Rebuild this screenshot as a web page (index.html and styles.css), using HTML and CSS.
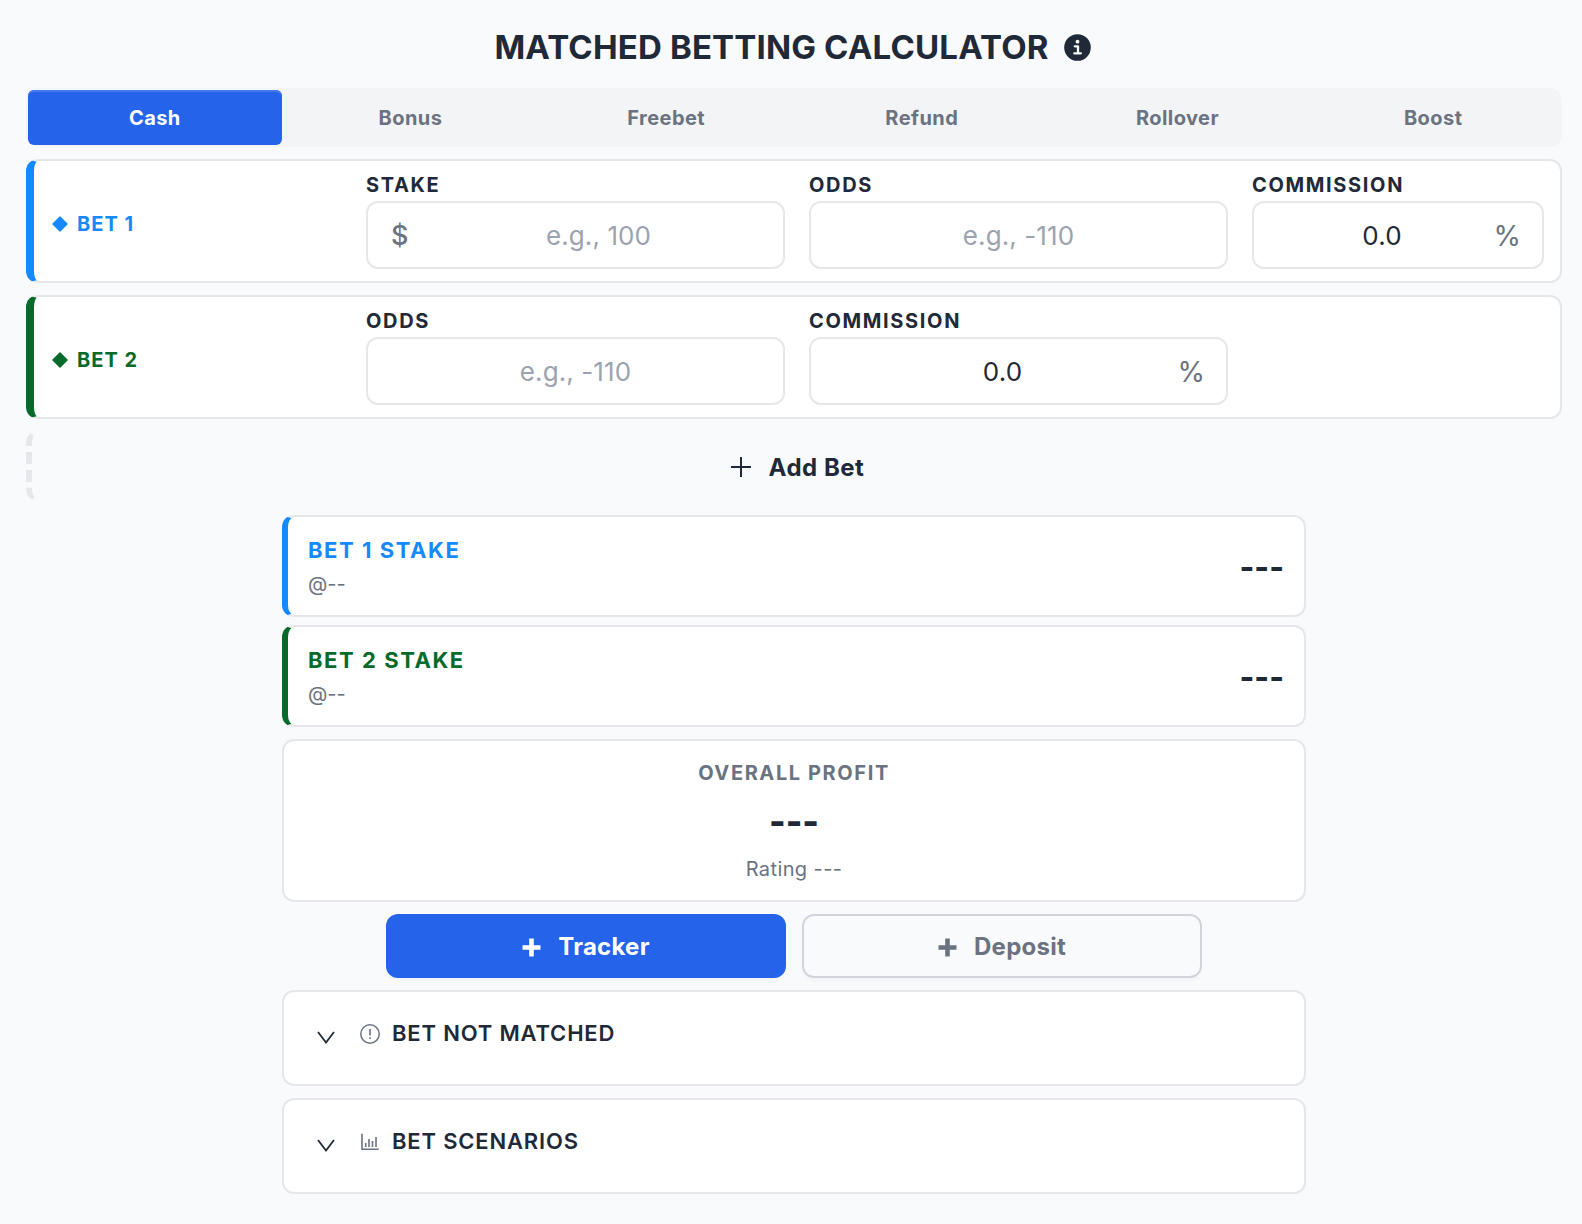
FILE: index.html
```html
<!DOCTYPE html>
<html lang="en">
<head>
<meta charset="utf-8">
<title>Matched Betting Calculator</title>
<link rel="stylesheet" href="styles.css">
</head>
<body>
<main class="page">
  <header class="header">
    <h1 class="title">MATCHED BETTING CALCULATOR</h1>
    <svg class="info" viewBox="0 0 27 27"><circle cx="13.500" cy="13.500" r="13.300" fill="currentColor"/><circle cx="13.500" cy="7.700" r="1.900" fill="#f9fafc"/><path d="M10.800 12.300h3.200v7M10.300 19.300h6.600" fill="none" stroke="#f9fafc" stroke-width="2.300" stroke-linecap="round" stroke-linejoin="round"/></svg>
  </header>
  <nav class="tabs">
    <button class="tab tab-active">Cash</button>
    <button class="tab">Bonus</button>
    <button class="tab">Freebet</button>
    <button class="tab">Refund</button>
    <button class="tab">Rollover</button>
    <button class="tab">Boost</button>
  </nav>

  <section class="bet blue">
    <div class="bet-name"><svg class="diamond" viewBox="0 0 16 16"><path fill="currentColor" d="M8 0l8 8-8 8-8-8z"/></svg><span>BET 1</span></div>
    <div class="field"><span class="label">STAKE</span><div class="box"><span class="unit unit-left">$</span><span class="value muted">e.g., 100</span></div></div>
    <div class="field"><span class="label">ODDS</span><div class="box"><span class="value muted">e.g., -110</span></div></div>
    <div class="field"><span class="label">COMMISSION</span><div class="box box-percent"><span class="value">0.0</span><span class="unit unit-right">%</span></div></div>
  </section>
  <section class="bet green">
    <div class="bet-name"><svg class="diamond" viewBox="0 0 16 16"><path fill="currentColor" d="M8 0l8 8-8 8-8-8z"/></svg><span>BET 2</span></div>
    <div class="field"><span class="label">ODDS</span><div class="box"><span class="value muted">e.g., -110</span></div></div>
    <div class="field"><span class="label">COMMISSION</span><div class="box box-percent"><span class="value">0.0</span><span class="unit unit-right">%</span></div></div>
  </section>
  <button class="add-bet"><svg class="add-icon" viewBox="0 0 20 20"><path d="M10 0v20M0 10h20" stroke="currentColor" stroke-width="2"/></svg><span>Add Bet</span></button>

  <div class="results">
    <section class="stake blue"><div><h2 class="stake-title">BET 1 STAKE</h2><p class="stake-odds">@--</p></div><strong class="stake-value">---</strong></section>
    <section class="stake green"><div><h2 class="stake-title">BET 2 STAKE</h2><p class="stake-odds">@--</p></div><strong class="stake-value">---</strong></section>
    <section class="profit">
      <h2 class="profit-title">OVERALL PROFIT</h2>
      <strong class="profit-value">---</strong>
      <p class="profit-rating">Rating ---</p>
    </section>
    <div class="actions">
      <button class="action action-primary"><svg class="plus" viewBox="0 0 19 19"><path d="M9.500 .5v18M.5 9.500h18" stroke="currentColor" stroke-width="4.600"/></svg><span>Tracker</span></button>
      <button class="action action-outline"><svg class="plus" viewBox="0 0 19 19"><path d="M9.500 .5v18M.5 9.500h18" stroke="currentColor" stroke-width="4.600"/></svg><span>Deposit</span></button>
    </div>
    <section class="panel">
      <svg class="chevron" viewBox="0 0 18 13"><path d="M1 1l8 10.500L17 1" fill="none" stroke="currentColor" stroke-width="1.800"/></svg>
      <svg class="panel-icon" viewBox="0 0 20 20"><circle cx="10" cy="10" r="9.200" fill="none" stroke="currentColor" stroke-width="1.500"/><path d="M10 5v6.500M10 13.300v1.700" stroke="currentColor" stroke-width="1.600"/></svg>
      <h2 class="panel-title">BET NOT MATCHED</h2>
    </section>
    <section class="panel">
      <svg class="chevron" viewBox="0 0 18 13"><path d="M1 1l8 10.500L17 1" fill="none" stroke="currentColor" stroke-width="1.800"/></svg>
      <svg class="panel-icon" viewBox="0 0 20 20"><path d="M2 1.700v15.600h16.700M5.700 11v4M9 7v8M12.500 9v6M16 5v10" fill="none" stroke="currentColor" stroke-width="1.600"/></svg>
      <h2 class="panel-title">BET SCENARIOS</h2>
    </section>
  </div>
</main>
</body>
</html>
```
FILE: styles.css
```css
* { box-sizing: border-box; }
body { margin: 0; background: #f9fafc; color: #1f2937; font-family: Inter, "Liberation Sans", sans-serif; }
h1, h2, p { margin: 0; }
button { font-family: inherit; border: 0; background: none; padding: 0; color: inherit; }
svg { display: block; flex: none; }
.page { width: 1536px; margin-left: 26px; display: flex; flex-direction: column; }
.header { height: 88px; padding: 7px 3px 0 0; display: flex; align-items: center; justify-content: center; gap: 15px; }
.title { margin-top: -2px; font-size: 33px; line-height: 40px; font-weight: 700; letter-spacing: 0.16px; }
.info { width: 27px; height: 27px; }

.tabs { height: 59px; padding: 2px; display: grid; grid-template-columns: repeat(6, 1fr); gap: 2px; background: #f3f4f6; border-radius: 12px; }
.tab { height: 55px; border-radius: 6px; color: #6b7280; font-size: 20px; font-weight: 700; letter-spacing: 0.45px; }
.tab-active { background: #2563eb; color: #fff; box-shadow: inset 0 2px 0 #447aee; }

.blue { --accent: #1789ff; }
.green { --accent: #056a2a; }
.bet { height: 124px; margin-top: 12px; padding: 12px 16px; display: grid; grid-template-columns: 292px 419px 419px 292px; gap: 24px; background: #fff; border: 2px solid #e5e7eb; border-left: 8px solid var(--accent); border-radius: 12px; }
.bet-name { display: flex; align-items: center; gap: 9px; padding: 6px 0 0 2px; color: var(--accent); font-size: 20px; font-weight: 700; letter-spacing: 1px; }
.diamond { width: 16px; height: 16px; }
.field { display: flex; flex-direction: column; gap: 4px; min-width: 0; }
.label { font-size: 20px; line-height: 24px; font-weight: 700; letter-spacing: 1.65px; }
.box { height: 68px; display: flex; align-items: center; padding: 2px 22px 0; border: 2px solid #e5e7eb; border-radius: 12px; }
.box-percent { padding: 2px 21px 0 23px; }
.value { flex: 1; text-align: center; font-size: 26px; line-height: 32px; letter-spacing: 0.1px; }
.muted { color: #9ca3af; }
.unit { color: #6b7280; line-height: 32px; }
.unit-left { width: 46px; padding-left: 1px; font-size: 27px; font-weight: 500; }
.unit-right { width: 34px; display: flex; justify-content: flex-end; font-size: 28px; }

.add-bet { height: 70px; margin-top: 12px; display: flex; align-items: center; justify-content: center; gap: 18px; border: 2px solid transparent; border-left: 6px dashed #e5e7eb; border-radius: 12px; padding: 2px 0 0 3px; font-size: 24px; font-weight: 700; letter-spacing: 0.5px; }
.add-icon { width: 20px; height: 20px; }

.results { width: 1024px; margin: 14px auto 0; display: flex; flex-direction: column; }
.stake { height: 102px; margin-bottom: 8px; padding: 2px 20px 0; display: flex; align-items: center; justify-content: space-between; background: #fff; border: 2px solid #e5e7eb; border-left: 6px solid var(--accent); border-radius: 12px; }
.stake-title { color: var(--accent); font-size: 22px; line-height: 32px; font-weight: 700; letter-spacing: 1.55px; }
.stake-odds { margin-top: 2px; color: #6b7280; font-size: 20px; line-height: 32px; }
.stake-value { font-size: 31.5px; line-height: 40px; font-weight: 800; }
.profit { height: 163px; margin-top: 4px; padding: 18px 0; display: flex; flex-direction: column; align-items: center; background: #fff; border: 2px solid #e5e7eb; border-radius: 12px; }
.profit-title { color: #6b7280; font-size: 20px; line-height: 28px; font-weight: 700; letter-spacing: 1.6px; }
.profit-value { margin-top: 13px; font-size: 35.5px; line-height: 44px; font-weight: 800; }
.profit-rating { margin-top: 11px; color: #6b7280; font-size: 20px; line-height: 28px; letter-spacing: 0.4px; }
.actions { margin-top: 12px; display: flex; justify-content: center; gap: 16px; }
.action { width: 400px; height: 64px; display: flex; align-items: center; justify-content: center; gap: 17px; border-radius: 12px; font-size: 24px; font-weight: 700; letter-spacing: 0.25px; box-shadow: 0 4px 2px rgba(0, 0, 0, 0.02); }
.action-primary { background: #2563eb; color: #fff; }
.action-outline { background: #f9fafc; color: #6b7280; border: 2px solid #d1d5db; }
.plus { width: 19px; height: 19px; margin-top: 3px; }
.panel { height: 96px; margin-top: 12px; padding: 25px 33px; display: flex; align-items: flex-start; background: #fff; border: 2px solid #e5e7eb; border-radius: 12px; }
.chevron { width: 18px; height: 13px; margin-top: 14px; }
.panel-icon { width: 20px; height: 20px; margin: 7px 12px 0 25px; color: #6b7280; }
.panel-title { font-size: 22px; line-height: 32px; font-weight: 600; letter-spacing: 0.82px; }
```
